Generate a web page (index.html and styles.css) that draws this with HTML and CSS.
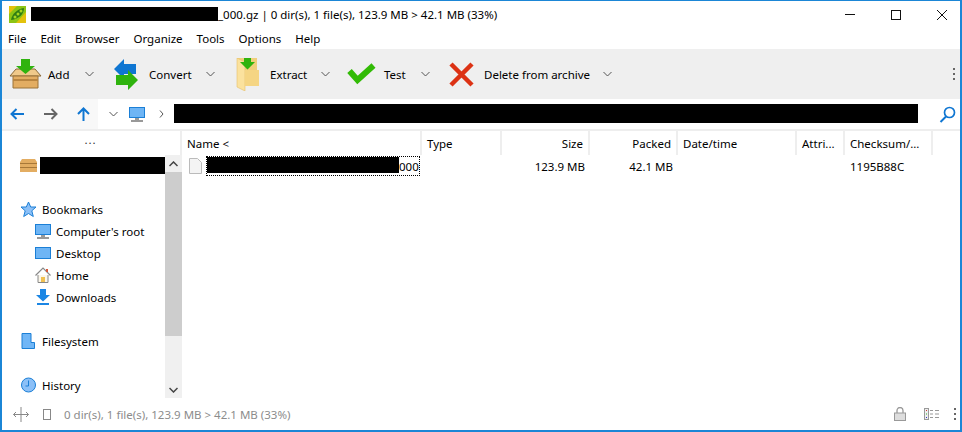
FILE: index.html
```html
<!DOCTYPE html>
<html lang="en">

<head>
    <meta charset="UTF-8">
    <title>PeaZip</title>
    <link rel="stylesheet" href="styles.css">
</head>

<body>
    <div class="window">
        <div class="titlebar">
            <svg class="app-icon" width="17" height="17" viewBox="0 0 17 17">
                <rect width="17" height="17" fill="#e3c20c"/>
                <path d="M0 17V8L8 0h9v6L7 17z" fill="#8cc414"/>
                <path d="M2 14C3 8 8 3 15 2c0 6-5 11-13 12z" fill="#2f7d14"/>
                <circle cx="6" cy="11" r="1.5" fill="#a6d61e"/>
                <circle cx="9" cy="8" r="1.5" fill="#a6d61e"/>
                <circle cx="12" cy="5" r="1.5" fill="#a6d61e"/>
            </svg>
            <span class="redact title-redact"></span>
            <span class="title-text">_000.gz | 0 dir(s), 1 file(s), 123.9 MB &gt; 42.1 MB (33%)</span>
            <div class="win-buttons">
                <svg width="12" height="12" viewBox="0 0 12 12"><path d="M1 5.5h10" stroke="#111" fill="none"/></svg>
                <svg width="12" height="12" viewBox="0 0 12 12"><rect x="1.5" y="1.5" width="9" height="9" stroke="#111" fill="none"/></svg>
                <svg width="12" height="12" viewBox="0 0 12 12"><path d="M1 1l10 10M11 1L1 11" stroke="#111" fill="none"/></svg>
            </div>
        </div>

        <div class="menubar">
            <span>File</span>
            <span>Edit</span>
            <span>Browser</span>
            <span>Organize</span>
            <span>Tools</span>
            <span>Options</span>
            <span>Help</span>
        </div>

        <div class="toolbar">
            <div class="tool tool-add">
                <svg width="33" height="30" viewBox="0 0 33 30">
                    <path d="M7 10h19l6 7H1z" fill="#f0c98a" stroke="#8a6a3a"/>
                    <path d="M4 17h25v12H4z" fill="#e3ad62" stroke="#9a7238"/>
                    <path d="M4 20h25v2H4z" fill="#b98540"/>
                    <path d="M12 0h9v7h5l-9.500 8L7 7h5z" fill="#2fb30e"/>
                </svg>
                <span>Add</span>
                <svg class="chev" width="9" height="6" viewBox="0 0 9 6"><path d="M.5 1l4 4 4-4" stroke="#555" fill="none"/></svg>
            </div>
            <div class="tool tool-convert">
                <svg width="25" height="31" viewBox="0 0 25 31">
                    <path d="M0 10L10 0v5h12v10H10v5z" fill="#0f76d2"/>
                    <path d="M24 21L14 31v-5H2V16h12v-5z" fill="#2fb30e"/>
                </svg>
                <span>Convert</span>
                <svg class="chev" width="9" height="6" viewBox="0 0 9 6"><path d="M.5 1l4 4 4-4" stroke="#555" fill="none"/></svg>
            </div>
            <div class="tool tool-extract">
                <svg width="23" height="33" viewBox="0 0 23 33">
                    <path d="M1 0h20v26H1z" fill="#f0cf7c"/>
                    <path d="M1 0l8 4v29l-8-4z" fill="#fbe29e" stroke="#e5c068" stroke-width=".6"/>
                    <path d="M9 12h14v16H9z" fill="#f5d583"/>
                    <path d="M8 0h7v4h4l-7.500 7.500L4 4h4z" fill="#2fb30e"/>
                </svg>
                <span>Extract</span>
                <svg class="chev" width="9" height="6" viewBox="0 0 9 6"><path d="M.5 1l4 4 4-4" stroke="#555" fill="none"/></svg>
            </div>
            <div class="tool tool-test">
                <svg width="31" height="22" viewBox="0 0 31 22">
                    <path d="M3.500 8L11.500 17 27.500 2.500" stroke="#32bb06" stroke-width="6" fill="none"/>
                </svg>
                <span>Test</span>
                <svg class="chev" width="9" height="6" viewBox="0 0 9 6"><path d="M.5 1l4 4 4-4" stroke="#555" fill="none"/></svg>
            </div>
            <div class="tool tool-delete">
                <svg width="25" height="25" viewBox="0 0 25 25">
                    <path d="M2 2l21 21M23 2L2 23" stroke="#dc3214" stroke-width="4.500" fill="none"/>
                </svg>
                <span>Delete from archive</span>
                <svg class="chev" width="9" height="6" viewBox="0 0 9 6"><path d="M.5 1l4 4 4-4" stroke="#555" fill="none"/></svg>
            </div>
            <div class="kebab"><i></i><i></i><i></i></div>
        </div>

        <div class="addressbar">
            <div class="nav-buttons">
                <svg width="15" height="12" viewBox="0 0 15 12"><path d="M14 6H2M6.500 1L1.500 6l5 5" stroke="#0f76d2" stroke-width="2" fill="none"/></svg>
                <svg width="15" height="12" viewBox="0 0 15 12"><path d="M1 6h12M8.500 1l5 5-5 5" stroke="#666" stroke-width="2" fill="none"/></svg>
                <svg width="13" height="14" viewBox="0 0 13 14"><path d="M6.500 14V2M1 7l5.500-5.500L12 7" stroke="#0f76d2" stroke-width="2" fill="none"/></svg>
            </div>
            <svg class="addr-chev" width="9" height="6" viewBox="0 0 9 6"><path d="M.5 1l4 4 4-4" stroke="#555" fill="none"/></svg>
            <svg class="addr-pc" width="16" height="15" viewBox="0 0 16 15">
                <rect x=".5" y=".5" width="15" height="10" fill="#6eb5f5" stroke="#1b7fd6"/>
                <path d="M6 11h4v2H6z" fill="#999"/>
                <path d="M2 13h12v2H2z" fill="#999"/>
            </svg>
            <svg class="addr-sep" width="5" height="8" viewBox="0 0 5 8"><path d="M1 .5l3 3.500-3 3.500" stroke="#555" fill="none"/></svg>
            <span class="redact path-redact"></span>
            <svg class="search" width="17" height="17" viewBox="0 0 17 17">
                <circle cx="10.500" cy="6.500" r="5" stroke="#0f76d2" stroke-width="1.700" fill="none"/>
                <path d="M7 10.500L1.500 16" stroke="#0f76d2" stroke-width="2" fill="none"/>
            </svg>
        </div>

        <div class="main">
            <div class="sidebar">
                <div class="side-head">...</div>
                <div class="side-body">
                    <div class="side-list">
                        <div class="side-row side-archive">
                            <svg width="17" height="13" viewBox="0 0 17 13">
                                <path d="M2 0h13l2 3v10H0V3z" fill="#e3ad62"/>
                                <path d="M0 4h17v1H0zM0 8h17v1H0z" fill="#a87838"/>
                            </svg>
                            <span class="redact side-redact"></span>
                        </div>
                        <div class="side-row side-group">
                            <svg width="17" height="17" viewBox="0 0 17 17"><path d="M8.500 1l2.200 5h5.300l-4.200 3.800 1.500 5.700-4.800-3-4.800 3 1.500-5.700L1 6h5.300z" fill="#8cc0f7" stroke="#1b7fd6"/></svg>
                            <span>Bookmarks</span>
                        </div>
                        <div class="side-row side-sub">
                            <svg width="16" height="15" viewBox="0 0 16 15">
                                <rect x=".5" y=".5" width="15" height="10" fill="#6eb5f5" stroke="#1b7fd6"/>
                                <path d="M6 11h4v2H6zM2 13h12v2H2z" fill="#999"/>
                            </svg>
                            <span>Computer's root</span>
                        </div>
                        <div class="side-row side-sub">
                            <svg width="16" height="12" viewBox="0 0 16 12"><rect x=".5" y=".5" width="15" height="11" fill="#6eb5f5" stroke="#1b7fd6"/></svg>
                            <span>Desktop</span>
                        </div>
                        <div class="side-row side-sub">
                            <svg width="16" height="16" viewBox="0 0 16 16">
                                <path d="M3 8v7.500h10V8" fill="#fbf6ea" stroke="#888"/>
                                <path d="M.5 8.500L8 1l7.500 7.500" fill="none" stroke="#888" stroke-width="1.200"/>
                                <path d="M11 2h2v3h-2z" fill="#d85a3a"/>
                                <path d="M6 10h4v5H6z" fill="#f0c050"/>
                            </svg>
                            <span>Home</span>
                        </div>
                        <div class="side-row side-sub">
                            <svg width="16" height="16" viewBox="0 0 16 16">
                                <path d="M5 0h6v6h4l-7 6.500L1 6h4z" fill="#1b86e4"/>
                                <path d="M2 14h12v2H2z" fill="#1b86e4"/>
                            </svg>
                            <span>Downloads</span>
                        </div>
                        <div class="side-row side-group">
                            <svg width="14" height="16" viewBox="0 0 14 16"><path d="M.5.500h9v9h3.500v6H.5z" fill="#70b6f6" stroke="#1b7fd6"/></svg>
                            <span>Filesystem</span>
                        </div>
                        <div class="side-row side-group">
                            <svg width="16" height="16" viewBox="0 0 16 16">
                                <circle cx="8" cy="8" r="7" fill="#8cc0f7" stroke="#1b7fd6"/>
                                <path d="M8 3.500V9H5" fill="none" stroke="#1b7fd6"/>
                            </svg>
                            <span>History</span>
                        </div>
                    </div>
                    <div class="scrollbar">
                        <div class="scroll-btn"><svg width="9" height="6" viewBox="0 0 9 6"><path d="M.5 5l4-4 4 4" stroke="#444" stroke-width="1.500" fill="none"/></svg></div>
                        <div class="scroll-thumb"></div>
                        <div class="scroll-track"></div>
                        <div class="scroll-btn"><svg width="9" height="6" viewBox="0 0 9 6"><path d="M.5 1l4 4 4-4" stroke="#444" stroke-width="1.500" fill="none"/></svg></div>
                    </div>
                </div>
            </div>

            <div class="files">
                <div class="file-head">
                    <div class="col col-name">Name &lt;</div>
                    <div class="col col-type">Type</div>
                    <div class="col col-size">Size</div>
                    <div class="col col-packed">Packed</div>
                    <div class="col col-date">Date/time</div>
                    <div class="col col-attr">Attri...</div>
                    <div class="col col-sum">Checksum/...</div>
                </div>
                <div class="file-row">
                    <div class="col col-name">
                        <svg width="13" height="16" viewBox="0 0 13 16"><path d="M.5.500h8l4 4v11H.5z" fill="#f4f4f4" stroke="#bbb"/></svg>
                        <div class="file-focus"><span class="redact file-redact"></span><span>000</span></div>
                    </div>
                    <div class="col col-type"></div>
                    <div class="col col-size">123.9 MB</div>
                    <div class="col col-packed">42.1 MB</div>
                    <div class="col col-date"></div>
                    <div class="col col-attr"></div>
                    <div class="col col-sum">1195B88C</div>
                </div>
            </div>
        </div>

        <div class="statusbar">
            <svg width="16" height="15" viewBox="0 0 16 15"><path d="M8 0v15M.5 7.500h15M3 5L.5 7.500 3 10M13 5l2.500 2.500L13 10" stroke="#888" fill="none"/></svg>
            <svg class="status-page" width="8" height="11" viewBox="0 0 8 11"><rect x=".5" y=".5" width="7" height="10" fill="none" stroke="#888"/></svg>
            <span class="status-text">0 dir(s), 1 file(s), 123.9 MB &gt; 42.1 MB (33%)</span>
            <svg class="status-lock" width="12" height="14" viewBox="0 0 12 14">
                <path d="M3 6V3.500a3 3 0 0 1 6 0V6" fill="none" stroke="#999" stroke-width="1.300"/>
                <rect x=".5" y="6" width="11" height="7.500" fill="#ddd" stroke="#999"/>
            </svg>
            <svg class="status-list" width="16" height="12" viewBox="0 0 16 12">
                <rect x=".5" y=".5" width="4" height="11" fill="#eee" stroke="#999"/>
                <path d="M2 2h1v1H2z" fill="#c33"/><path d="M2 5.500h1v1H2z" fill="#3a3"/><path d="M2 9h1v1H2z" fill="#33c"/>
                <path d="M6 2.500h3M11 2.500h4M6 6h3M11 6h4M6 9.500h3M11 9.500h4" stroke="#999" fill="none"/>
            </svg>
            <div class="kebab kebab-status"><i></i><i></i><i></i></div>
        </div>
    </div>
</body>

</html>
```

FILE: styles.css
```css
* {
    box-sizing: border-box;
}

html, body {
    margin: 0;
    height: 100%;
    overflow: hidden;
}

body {
    font-family: "Noto Sans", "Open Sans", sans-serif;
    font-size: 11.5px;
    color: #000;
    background-color: #fff;
}

svg {
    display: block;
    flex: none;
}

.window {
    height: 432px;
    display: flex;
    flex-direction: column;
    border: 1px solid #1b86d6;
    border-width: 2px 2px 2px 2px;
    border-top-width: 1px;
}

.redact {
    display: block;
    background-color: #000;
    flex: none;
}

/* title */
.titlebar {
    height: 27px;
    display: flex;
    align-items: center;
    padding-left: 7px;
}

.app-icon {
    margin-right: 5px;
}

.title-redact {
    width: 187px;
    height: 14px;
    margin-top: -2px;
}

.win-buttons {
    margin-left: auto;
    display: flex;
    gap: 34px;
    padding-right: 12px;
}

/* menu */
.menubar {
    height: 21px;
    display: flex;
    align-items: center;
    gap: 14px;
    padding-left: 6px;
}

/* toolbar */
.toolbar {
    height: 50px;
    display: flex;
    align-items: center;
    background-color: #efefef;
    padding-left: 7px;
}

.tool {
    display: flex;
    align-items: center;
}

.tool-add { width: 105px; }
.tool-convert { width: 122px; }
.tool-extract { width: 110px; }
.tool-test { width: 103px; }
.tool-delete { width: 200px; }

.tool-add span { margin-left: 6px; width: 37px; }
.tool-convert span { margin-left: 10px; width: 57px; }
.tool-extract span { margin-left: 11px; width: 51px; }
.tool-test span { margin-left: 7px; width: 37px; }
.tool-delete span { margin-left: 10px; width: 119px; }

.kebab {
    margin-left: auto;
    margin-right: 5px;
    display: flex;
    flex-direction: column;
    gap: 3px;
}

.kebab i {
    display: block;
    width: 2px;
    height: 2px;
    background-color: #666;
}

/* address bar */
.addressbar {
    height: 32px;
    display: flex;
    align-items: center;
    border-bottom: 2px solid #eee;
}

.nav-buttons {
    width: 96px;
    height: 30px;
    display: flex;
    align-items: center;
    gap: 18px;
    padding-left: 8px;
    background-color: #f8f8f8;
}

.nav-buttons svg:last-child {
    margin-left: 1px;
}

.addr-chev {
    margin-left: 11px;
}

.addr-pc {
    margin-left: 11px;
}

.addr-sep {
    margin-left: 14px;
}

.path-redact {
    width: 744px;
    height: 19px;
    margin-left: 10px;
    margin-top: -1px;
}

.search {
    margin-left: 21px;
}

/* main area */
.main {
    flex: 1;
    min-height: 0;
    display: flex;
}

.sidebar {
    width: 180px;
    display: flex;
    flex-direction: column;
    border-right: 2px solid #eee;
}

.side-head {
    height: 24px;
    text-align: center;
    line-height: 18px;
    letter-spacing: 1px;
    color: #333;
    padding-right: 1px;
}

.side-body {
    flex: 1;
    min-height: 0;
    display: flex;
}

.side-list {
    flex: 1;
    min-width: 0;
    overflow: hidden;
    padding-left: 18px;
}

.side-row {
    height: 22px;
    display: flex;
    align-items: center;
}

.side-row svg {
    margin-right: 5px;
}

.side-archive {
    margin-top: -1px;
}

.side-archive svg {
    margin-right: 3px;
}

.side-redact {
    width: 125px;
    height: 17px;
}

.side-group {
    margin-top: 22px;
}

.side-group svg {
    width: 17px;
}

.side-sub {
    padding-left: 15px;
}

.scrollbar {
    width: 17px;
    margin-right: -2px;
    background-color: #f0f0f0;
    display: flex;
    flex-direction: column;
    flex: none;
}

.scroll-btn {
    height: 17px;
    display: flex;
    align-items: center;
    justify-content: center;
    flex: none;
}

.scroll-thumb {
    height: 164px;
    background-color: #cdcdcd;
}

.scroll-track {
    flex: 1;
}

/* file list */
.files {
    flex: 1;
    min-width: 0;
}

.file-head, .file-row {
    display: flex;
}

.file-head {
    height: 24px;
}

.file-head .col {
    border-right: 2px solid #eee;
}

.file-head .col-sum {
    border-right: 2px solid #eee;
}

.col {
    display: flex;
    align-items: center;
    padding: 0 5px;
    flex: none;
}

.col-name { width: 240px; }
.col-type { width: 80px; }
.col-size { width: 88px; justify-content: flex-end; }
.col-packed { width: 88px; justify-content: flex-end; }
.col-date { width: 119px; }
.col-attr { width: 48px; }
.col-sum { width: 88px; }

.file-row {
    height: 22px;
}

.file-row .col-name {
    padding-left: 7px;
}

.file-focus {
    display: flex;
    align-items: center;
    height: 20px;
    margin-left: 4px;
    padding-right: 1px;
    outline: 1px dotted #000;
    outline-offset: -1px;
}

.file-redact {
    width: 192px;
    height: 16px;
    margin-left: 1px;
    margin-top: -3px;
}

/* status bar */
.statusbar {
    height: 32px;
    display: flex;
    align-items: center;
    padding-left: 11px;
    color: #8c8c8c;
}

.status-page {
    margin-left: 14px;
}

.status-text {
    margin-left: 13px;
}

.status-lock {
    margin-left: auto;
}

.status-list {
    margin-left: 18px;
}

.kebab-status {
    margin-left: 14px;
    margin-right: 4px;
}
```
